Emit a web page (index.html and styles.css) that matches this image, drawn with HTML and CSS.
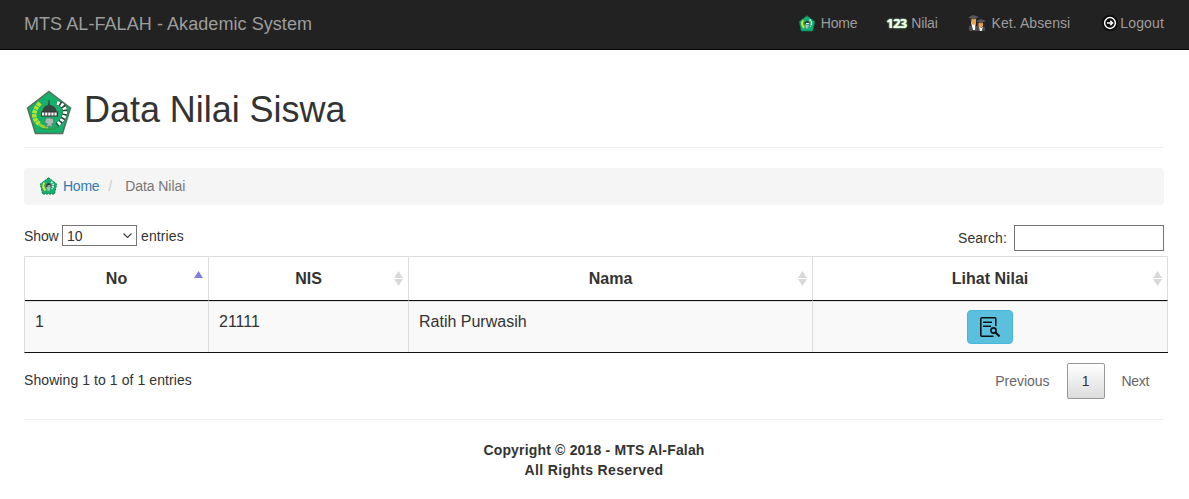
FILE: index.html
```html
<!DOCTYPE html>
<html lang="id">
<head>
<meta charset="utf-8">
<title>MTS AL-FALAH - Akademic System</title>
<link rel="stylesheet" href="styles.css">
</head>
<body>
<svg class="sprite" aria-hidden="true">
  <symbol id="emblem" viewBox="0 0 46 46">
    <path d="M23 1.500 44.500 18 36.500 43.500H9.500L1.500 18z" fill="#14b06c" stroke="#55705c" stroke-width="1.500"/>
    <path d="M14 13Q3 25 13 34" fill="none" stroke="#b7e32c" stroke-width="4.500" stroke-dasharray="3.500 .7"/>
    <path d="M13 34q4 4 9 3" fill="none" stroke="#9cd32c" stroke-width="2.500"/>
    <path d="M31 13q9 2 8 10-1 7-8 12" fill="none" stroke="#26483a" stroke-width="4.500"/>
    <path d="M31 13q9 2 8 10-1 7-8 12" fill="none" stroke="#fff" stroke-width="4" stroke-dasharray="2.500 1.700"/>
    <path d="M16 22q1-6 6-7l.6-5h.8l.6 5q6 1 7 7z" fill="#36463c"/>
    <path d="M15 21.500h17v5H15z" fill="#3b3337"/>
    <path d="M16 24h15" stroke="#f4f4f4" stroke-width="3" stroke-dasharray="2.300 .8"/>
    <path d="m23.500 28 4 1v4l-2 1 2 3-4-1-4 1 2-3-3-2 2-4z" fill="#aab9b2" stroke="#60796c" stroke-width=".7"/>
    <path d="M15 38q8 3 17-1" fill="none" stroke="#3b9438" stroke-width="1.300"/>
  </symbol>
  <symbol id="emblem-small" viewBox="0 0 18 18">
    <path d="M9 .8 17.200 7 15 17H3L.8 7z" fill="#18ad72" stroke="#078050" stroke-dasharray="2 1"/>
    <path d="M5 5.500q-3 4 1 8" fill="none" stroke="#d3e634" stroke-width="2"/>
    <path d="M6.500 8q2.500-4 5 0v2h-5z" fill="#333f3c"/>
    <path d="M11.500 5q4 2 1 7" fill="none" stroke="#fff" stroke-width="1.500" stroke-dasharray="1.500 1"/>
    <path d="M7 10h4l-1 4H8z" fill="#a8bcb4"/>
    <path d="M8 9h3" stroke="#fff"/>
  </symbol>
</svg>
<header class="navbar">
  <a class="brand">MTS AL-FALAH - Akademic System</a>
  <nav class="nav">
    <a class="nav-item item-home"><svg class="nav-emblem"><use href="#emblem-small"/></svg><span>Home</span></a>
    <a class="nav-item item-nilai"><span class="numbers">123</span><span>Nilai</span></a>
    <a class="nav-item item-absensi">
      <svg class="students" viewBox="0 0 18 16">
        <path d="M1 16V11l3-1 3 2 2-1 3-1 5 2v4z" fill="#4b4b50"/>
        <path d="M3 4h5v5l-2.500 2L3 9zM10 8h5v3l-2.500 2-2.500-2z" fill="#e9a24b"/>
        <path d="M0 2.500 5 0l6 2-5 2.500zM8 6l5-2 5 2-5 2.500z" fill="#57575d"/>
        <path d="M2 3v3h1.500V4M9 6v5h1.500V8M16 7v4h1" fill="#3a302e"/>
        <path d="m3.500 9 2 1 2-1-.5 6H5zM11 12l2 1 2-1-1.500 4H12z" fill="#fff"/>
      </svg><span>Ket. Absensi</span></a>
    <a class="nav-item item-logout">
      <svg class="logout" viewBox="0 0 16 16"><circle cx="8" cy="8" r="8" fill="#0b0b0b"/><circle cx="8" cy="8" r="5.400" fill="none" stroke="#fff" stroke-width="1.500"/><path d="M5 8h5.500M8.300 5.700 10.600 8l-2.300 2.300" fill="none" stroke="#fff" stroke-width="1.400"/></svg><span>Logout</span></a>
  </nav>
</header>
<main class="container">
  <div class="page-header">
    <svg class="page-logo"><use href="#emblem"/></svg>
    <h1>Data Nilai Siswa</h1>
  </div>
  <ol class="breadcrumb">
    <li class="crumb"><svg class="crumb-emblem"><use href="#emblem-small"/></svg><a class="crumb-link">Home</a></li>
    <li class="divider">/</li>
    <li>Data Nilai</li>
  </ol>
  <div class="controls">
    <label class="length">Show <span class="select">10<svg class="chevron" viewBox="0 0 9 5"><path d="m.5.500 4 4 4-4" fill="none" stroke="#444" stroke-width="1.200"/></svg></span> <span class="entries">entries</span></label>
    <label class="search">Search: <input class="search-input" type="text"></label>
  </div>
  <table class="data">
    <colgroup><col class="col-no"><col class="col-nis"><col class="col-nama"><col class="col-nilai"></colgroup>
    <thead><tr>
      <th><div class="head">No<svg class="sort" viewBox="0 0 9 15"><path d="M0 7 4.500 0 9 7z" fill="#8080dc"/></svg></div></th>
      <th><div class="head">NIS<svg class="sort" viewBox="0 0 9 15"><path d="M0 7 4.500 0 9 7zM0 8h9L4.500 15z" fill="#d9d9d9"/></svg></div></th>
      <th><div class="head">Nama<svg class="sort" viewBox="0 0 9 15"><path d="M0 7 4.500 0 9 7zM0 8h9L4.500 15z" fill="#d9d9d9"/></svg></div></th>
      <th><div class="head">Lihat Nilai<svg class="sort" viewBox="0 0 9 15"><path d="M0 7 4.500 0 9 7zM0 8h9L4.500 15z" fill="#d9d9d9"/></svg></div></th>
    </tr></thead>
    <tbody><tr>
      <td>1</td><td>21111</td><td>Ratih Purwasih</td>
      <td class="action"><button class="view" aria-label="Lihat Nilai"><svg class="view-icon" viewBox="0 0 20 20" fill="none" stroke="#111" stroke-width="1.600"><path d="M15.800 9V1.800q0-1-1-1h-13q-1 0-1 1v16.400q0 1 1 1H13.500M3 5.200h9M3 9.200h8"/><circle cx="13.500" cy="13.500" r="2.600"/><path d="m15.500 15.500 4 4" stroke-width="2"/></svg></button></td>
    </tr></tbody>
  </table>
  <div class="table-footer">
    <div class="info">Showing 1 to 1 of 1 entries</div>
    <div class="pager"><a class="page">Previous</a><a class="page current">1</a><a class="page next">Next</a></div>
  </div>
  <footer class="footer">Copyright © 2018 - MTS Al-Falah<br><span class="rights">All Rights Reserved</span></footer>
</main>
</body>
</html>
```
FILE: styles.css
```css
* { box-sizing: border-box; }
body { margin: 0; background: #fff; color: #333; font: 14px/20px "Liberation Sans", Arial, sans-serif; }
.sprite { display: none; }
svg { display: block; flex: none; }
.navbar { height: 50px; padding: 0 25px 3px 24px; display: flex; align-items: center; justify-content: space-between; background: #222; border-bottom: 1px solid #080808; color: #9d9d9d; }
.brand { font-size: 18px; letter-spacing: .065px; padding-top: 1px; }
.nav { display: flex; align-items: center; }
.nav-item { display: flex; align-items: center; gap: 5px; }
.item-home { letter-spacing: -.2px; }
.nav-emblem { width: 18px; height: 17px; }
.item-nilai { margin-left: 29px; gap: 3px; letter-spacing: -.2px; }
.numbers { width: 22px; font: bold 13px/16px "Noto Sans", sans-serif; letter-spacing: -.8px; color: #f4fff0; text-shadow: 0 0 1px #bdf5b5, 0 0 2px #8fe08f; }
.item-absensi { margin-left: 30px; letter-spacing: .07px; }
.students { width: 18px; height: 16px; }
.item-logout { margin-left: 32px; gap: 2px; letter-spacing: .15px; }
.item-absensi { gap: 6px; }
.logout { width: 16px; height: 16px; }
.container { padding: 0 25px 0 24px; }
.page-header { height: 98px; padding: 40px 0 0 2px; display: flex; align-items: flex-start; gap: 12px; border-bottom: 1px solid #eee; }
.page-logo { width: 46px; height: 46px; }
h1 { margin: 0; font-size: 36px; line-height: 40px; font-weight: 500; letter-spacing: -.04px; }
.breadcrumb { height: 37px; margin: 20px 0; padding: 0 15px 1px; display: flex; align-items: center; list-style: none; background: #f5f5f5; border-radius: 4px; color: #777; letter-spacing: -.07px; }
.crumb { display: flex; align-items: center; gap: 5px; letter-spacing: -.25px; }
.crumb-emblem { width: 19px; height: 18px; }
.crumb-link { color: #337ab7; }
.divider { margin: 0 13px 0 9px; color: #ccc; }
.controls { height: 31px; display: flex; justify-content: space-between; align-items: flex-start; }
.length { display: flex; align-items: flex-start; gap: 4px; height: 22px; line-height: 22px; letter-spacing: -.1px; }
.select { width: 75px; height: 21px; padding: 0 4px; display: flex; align-items: center; justify-content: space-between; border: 1px solid #767676; background: #fff; letter-spacing: 0; margin-left: -.6px; }
.entries { letter-spacing: .1px; }
.chevron { width: 9px; height: 5px; }
.search { display: flex; align-items: center; gap: 7px; letter-spacing: .1px; }
.search-input { width: 150px; height: 26px; padding: 1px 4px; border: 1px solid #767676; background: #fff; font: inherit; }
.data { width: 1144px; table-layout: fixed; border-collapse: separate; border-spacing: 0; border-top: 1px solid #ddd; border-left: 1px solid #ddd; border-bottom: 1px solid #111; font-size: 16px; }
.col-no { width: 184px; }
.col-nis { width: 200px; }
.col-nama { width: 404px; }
.data th, .data td { border-right: 1px solid #ddd; }
.data th { height: 44px; padding: 0 5px 0 14px; border-bottom: 1px solid #111; }
.head { display: grid; grid-template-columns: 1fr 9px; align-items: center; }
.sort { width: 9px; height: 15px; }
.data td { height: 51px; padding: 10px; vertical-align: top; background: #f9f9f9; border-top: 1px solid #ddd; }
.data .action { padding: 8px 10px; }
.view { width: 46px; height: 34px; margin: 0 auto; padding: 0; display: flex; align-items: center; justify-content: center; background: #5bc0de; border: 1px solid #46b8da; border-radius: 4px; }
.view-icon { width: 20px; height: 20px; }
.table-footer { height: 67px; display: flex; justify-content: space-between; align-items: flex-start; border-bottom: 1px solid #eee; }
.info { padding-top: 17px; letter-spacing: .08px; }
.pager { display: flex; gap: 2px; padding-top: 10px; }
.page { height: 36px; padding: 8px 15px 0; color: #666; }
.page.next { letter-spacing: -.35px; }
.page.current { width: 38px; padding: 7px 0 0; text-align: center; color: #333; border: 1px solid #979797; border-radius: 2px; background: linear-gradient(#fff, #dcdcdc); }
.footer { padding-top: 20px; text-align: center; font-weight: bold; letter-spacing: .17px; }
.rights { letter-spacing: .35px; }
```
